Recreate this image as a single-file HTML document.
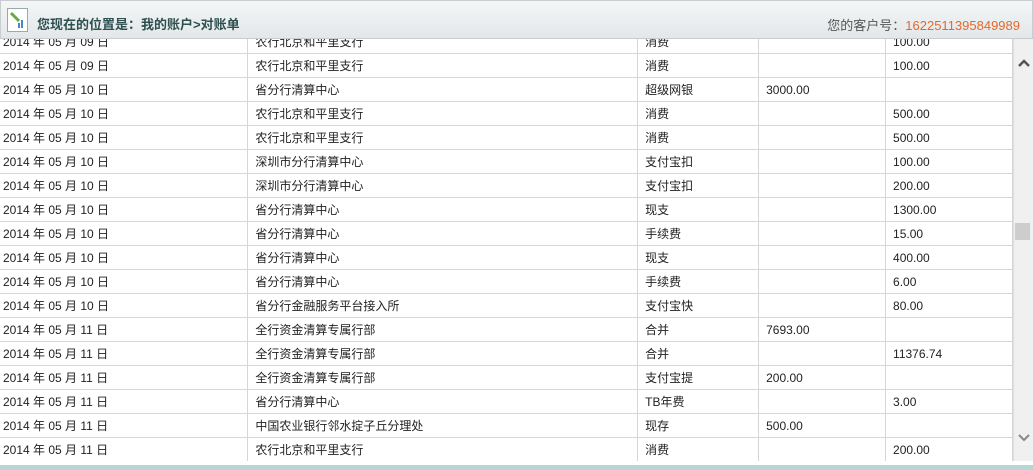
<!DOCTYPE html>
<html><head><meta charset="utf-8"><style>
body{margin:0;width:1033px;height:470px;overflow:hidden;background:#fff;font-family:"Liberation Sans","Noto Sans CJK SC",sans-serif;font-size:12px;color:#222;position:relative}
.hdr{position:absolute;left:0;top:0;width:1031px;height:37px;background:linear-gradient(#f4f6f7,#e3e7e9);border:1px solid #c8cdd0;z-index:2}
.hdr .t{position:absolute;left:36px;top:13px;font-size:13px;font-weight:bold;color:#2d4f4f}
.hdr .r{position:absolute;right:12px;top:14px;font-size:13px;color:#555}
.hdr .r span{color:#e06a2c}
.icon{position:absolute;left:6px;top:7px;width:19px;height:22px;border:1px solid #9aa;background:#fff}
.wrap{position:absolute;left:0;top:30px;width:1013px;height:431px;overflow:hidden}
table{border-collapse:collapse;width:1013px}
td{height:23px;border-bottom:1px solid #d6d6d6;border-right:1px solid #d6d6d6;padding:0 0 0 7px;white-space:nowrap}
td:first-child{padding-left:3px}
.sb{position:absolute;left:1013px;top:38px;width:20px;height:423px;background:#f0f0f0;border-left:1px solid #ddd}
.th{position:absolute;left:1015px;top:223px;width:15px;height:17px;background:#cdcdcd}
.bot{position:absolute;left:0;top:465px;width:1033px;height:5px;background:#b7d6d6}
</style></head><body>
<div class="hdr"><div class="icon"><svg width="19" height="22"><path d="M3 4 L11 12" stroke="#6a4" stroke-width="3"/><rect x="10" y="14" width="2" height="5" fill="#48c"/><rect x="13" y="11" width="2" height="8" fill="#48c"/></svg></div><div class="t">您现在的位置是：我的账户&gt;对账单</div><div class="r">您的客户号：<span>1622511395849989</span></div></div>
<div class="wrap"><table>
<colgroup><col style="width:248px"><col style="width:390px"><col style="width:121px"><col style="width:127px"><col style="width:127px"></colgroup>
<tr><td>2014 年 05 月 09 日</td><td>农行北京和平里支行</td><td>消费</td><td></td><td>100.00</td></tr>
<tr><td>2014 年 05 月 09 日</td><td>农行北京和平里支行</td><td>消费</td><td></td><td>100.00</td></tr>
<tr><td>2014 年 05 月 10 日</td><td>省分行清算中心</td><td>超级网银</td><td>3000.00</td><td></td></tr>
<tr><td>2014 年 05 月 10 日</td><td>农行北京和平里支行</td><td>消费</td><td></td><td>500.00</td></tr>
<tr><td>2014 年 05 月 10 日</td><td>农行北京和平里支行</td><td>消费</td><td></td><td>500.00</td></tr>
<tr><td>2014 年 05 月 10 日</td><td>深圳市分行清算中心</td><td>支付宝扣</td><td></td><td>100.00</td></tr>
<tr><td>2014 年 05 月 10 日</td><td>深圳市分行清算中心</td><td>支付宝扣</td><td></td><td>200.00</td></tr>
<tr><td>2014 年 05 月 10 日</td><td>省分行清算中心</td><td>现支</td><td></td><td>1300.00</td></tr>
<tr><td>2014 年 05 月 10 日</td><td>省分行清算中心</td><td>手续费</td><td></td><td>15.00</td></tr>
<tr><td>2014 年 05 月 10 日</td><td>省分行清算中心</td><td>现支</td><td></td><td>400.00</td></tr>
<tr><td>2014 年 05 月 10 日</td><td>省分行清算中心</td><td>手续费</td><td></td><td>6.00</td></tr>
<tr><td>2014 年 05 月 10 日</td><td>省分行金融服务平台接入所</td><td>支付宝快</td><td></td><td>80.00</td></tr>
<tr><td>2014 年 05 月 11 日</td><td>全行资金清算专属行部</td><td>合并</td><td>7693.00</td><td></td></tr>
<tr><td>2014 年 05 月 11 日</td><td>全行资金清算专属行部</td><td>合并</td><td></td><td>11376.74</td></tr>
<tr><td>2014 年 05 月 11 日</td><td>全行资金清算专属行部</td><td>支付宝提</td><td>200.00</td><td></td></tr>
<tr><td>2014 年 05 月 11 日</td><td>省分行清算中心</td><td>TB年费</td><td></td><td>3.00</td></tr>
<tr><td>2014 年 05 月 11 日</td><td>中国农业银行邻水掟子丘分理处</td><td>现存</td><td>500.00</td><td></td></tr>
<tr><td>2014 年 05 月 11 日</td><td>农行北京和平里支行</td><td>消费</td><td></td><td>200.00</td></tr>
</table></div>
<div class="sb"><svg width="20" height="423"><path d="M5 28 L10 23 L15 28" stroke="#555" stroke-width="2.5" fill="none"/><path d="M5 397 L10 402 L15 397" stroke="#888" stroke-width="2" fill="none"/></svg></div>
<div class="th"></div>
<div class="bot"></div>
</body></html>
